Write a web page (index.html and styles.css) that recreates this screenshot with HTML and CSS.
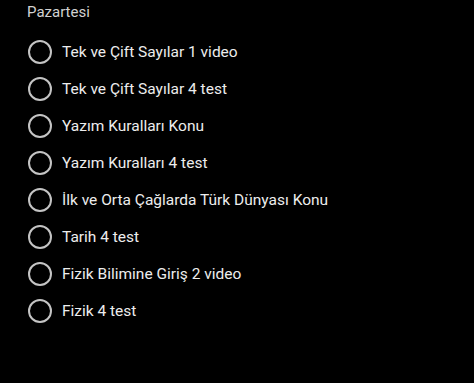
FILE: index.html
```html
<!DOCTYPE html>
<html lang="tr">
<head>
<meta charset="utf-8">
<link rel="stylesheet" href="styles.css">
</head>
<body>
<div class="day">
  <div class="day-title">Pazartesi</div>
  <ul class="tasks">
    <li class="task"><span class="radio"></span><span class="label">Tek ve Çift Sayılar 1 video</span></li>
    <li class="task"><span class="radio"></span><span class="label">Tek ve Çift Sayılar 4 test</span></li>
    <li class="task"><span class="radio"></span><span class="label">Yazım Kuralları Konu</span></li>
    <li class="task"><span class="radio"></span><span class="label">Yazım Kuralları 4 test</span></li>
    <li class="task"><span class="radio"></span><span class="label">İlk ve Orta Çağlarda Türk Dünyası Konu</span></li>
    <li class="task"><span class="radio"></span><span class="label">Tarih 4 test</span></li>
    <li class="task"><span class="radio"></span><span class="label">Fizik Bilimine Giriş 2 video</span></li>
    <li class="task"><span class="radio"></span><span class="label">Fizik 4 test</span></li>
  </ul>
</div>
</body>
</html>
```
FILE: styles.css
```css
html, body {
  margin: 0;
  padding: 0;
  background: #000;
  height: 100%;
}
body {
  font-family: Roboto, "Noto Sans", sans-serif;
  color: #ececec;
}
.day {
  padding: 2px 0 0 27px;
}
.day-title {
  font-size: 15px;
  line-height: 20px;
  color: #d2d2d2;
}
.tasks {
  list-style: none;
  margin: 12px 0 0 0;
  padding: 0;
}
.task {
  display: flex;
  align-items: center;
  height: 36.9px;
}
.radio {
  box-sizing: border-box;
  width: 24px;
  height: 24px;
  margin-left: 1px;
  border: 2px solid #c4c4c4;
  border-radius: 50%;
  flex: none;
}
.label {
  margin-left: 10px;
  font-size: 15.5px;
  line-height: 20px;
  color: #ededed;
}
```
